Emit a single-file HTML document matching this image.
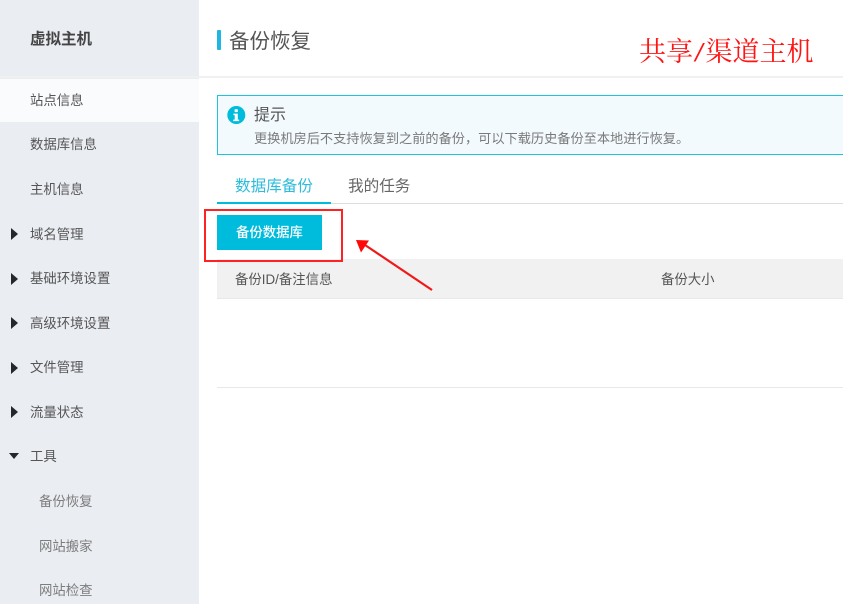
<!DOCTYPE html>
<html lang="zh">
<head>
<meta charset="utf-8">
<style>
html,body{margin:0;padding:0;width:843px;height:604px;overflow:hidden;background:#fff}
body{position:relative;font-family:"Liberation Sans","Noto Sans CJK SC",sans-serif;color:#555;filter:blur(.3px)}
.a{position:absolute;white-space:nowrap}
.nav{font-size:13.4px;line-height:18px;color:#555;left:30px}
.sub{font-size:13.4px;line-height:18px;color:#7d7d7d;left:39px}
.tri{position:absolute;left:11px;width:0;height:0;border-left:7px solid #23282d;border-top:6px solid transparent;border-bottom:6px solid transparent}
</style>
</head>
<body>
<div class="a" style="left:0;top:0;width:199px;height:604px;background:#eaedf2"></div>
<div class="a" style="left:0;top:79px;width:199px;height:43px;background:#fafbfd"></div>
<div class="a" style="left:0;top:76px;width:843px;height:2px;background:#f0f0f0"></div>
<div class="a" style="left:30px;top:30px;font-size:15.5px;line-height:20px;font-weight:700;color:#444">虚拟主机</div>

<div class="a nav" style="top:92px">站点信息</div>
<div class="a nav" style="top:136px">数据库信息</div>
<div class="a nav" style="top:181px">主机信息</div>
<div class="tri" style="top:228px"></div><div class="a nav" style="top:226px">域名管理</div>
<div class="tri" style="top:273px"></div><div class="a nav" style="top:270px">基础环境设置</div>
<div class="tri" style="top:317px"></div><div class="a nav" style="top:315px">高级环境设置</div>
<div class="tri" style="top:362px"></div><div class="a nav" style="top:359px">文件管理</div>
<div class="tri" style="top:406px"></div><div class="a nav" style="top:404px">流量状态</div>
<div class="a" style="left:9px;top:453px;width:0;height:0;border-top:6.500px solid #23282d;border-left:5.500px solid transparent;border-right:5.500px solid transparent"></div>
<div class="a nav" style="top:448px">工具</div>
<div class="a sub" style="top:493px">备份恢复</div>
<div class="a sub" style="top:538px">网站搬家</div>
<div class="a sub" style="top:582px">网站检查</div>

<div class="a" style="left:217px;top:30px;width:4px;height:20px;background:#1fb6e4;border-radius:1px"></div>
<div class="a" style="left:229px;top:28px;font-size:20.500px;line-height:28px;color:#555">备份恢复</div>
<div class="a" style="left:639px;top:37px;font-family:'Liberation Serif','Noto Serif CJK SC',serif;font-size:27px;line-height:30px;color:#ff1414">共享<span style="display:inline-block;width:12.500px;text-align:center;transform:scaleX(1.500)">/</span>渠道主机</div>

<div class="a" style="left:217px;top:95px;width:640px;height:58px;background:#f2fafe;border:1px solid #1cc4de"></div>
<svg class="a" style="left:227px;top:106px" width="19" height="19" viewBox="0 0 19 19">
<circle cx="9.300" cy="9" r="9" fill="#00bcdc"/>
<rect x="7.600" y="3.300" width="3.200" height="2.800" rx=".6" fill="#fff"/>
<path d="M6.400 7.600h4.400v6h1.300v1.500H6.200v-1.500h1.500V9.100H6.400z" fill="#fff"/>
</svg>
<div class="a" style="left:254px;top:105px;font-size:16px;line-height:22px;color:#555">提示</div>
<div class="a" style="left:254px;top:130px;font-size:13.200px;line-height:18px;color:#7a7a7a">更换机房后不支持恢复到之前的备份，可以下载历史备份至本地进行恢复。</div>

<div class="a" style="left:217px;top:203px;width:626px;height:1px;background:#ddd"></div>
<div class="a" style="left:217px;top:202px;width:114px;height:2px;background:#00bcdc"></div>
<div class="a" style="left:235px;top:176px;font-size:15.600px;line-height:22px;color:#2ebcdc">数据库备份</div>
<div class="a" style="left:348px;top:176px;font-size:15.600px;line-height:22px;color:#666">我的任务</div>

<div class="a" style="left:217px;top:215px;width:105px;height:35px;background:#00bcdc"></div>
<div class="a" style="left:236px;top:224px;font-size:13.400px;line-height:18px;color:#fff;font-weight:500">备份数据库</div>

<div class="a" style="left:217px;top:259px;width:626px;height:39px;background:#f1f1f1;border-bottom:1px solid #e8e8e8"></div>
<div class="a" style="left:204px;top:209px;width:135px;height:49px;border:2px solid #f22"></div>
<div class="a" style="left:235px;top:271px;font-size:13.400px;line-height:18px;color:#555">备份ID/备注信息</div>
<div class="a" style="left:661px;top:271px;font-size:13.400px;line-height:18px;color:#555">备份大小</div>
<div class="a" style="left:217px;top:387px;width:626px;height:1px;background:#e8e8e8"></div>

<svg class="a" style="left:350px;top:230px" width="90" height="66" viewBox="0 0 90 66">
<path d="M82 60L15 15" stroke="#f01818" stroke-width="2.200" fill="none"/>
<path d="M6 10L19 10.500L11 22.500z" fill="#ff0808"/>
</svg>
</body>
</html>
